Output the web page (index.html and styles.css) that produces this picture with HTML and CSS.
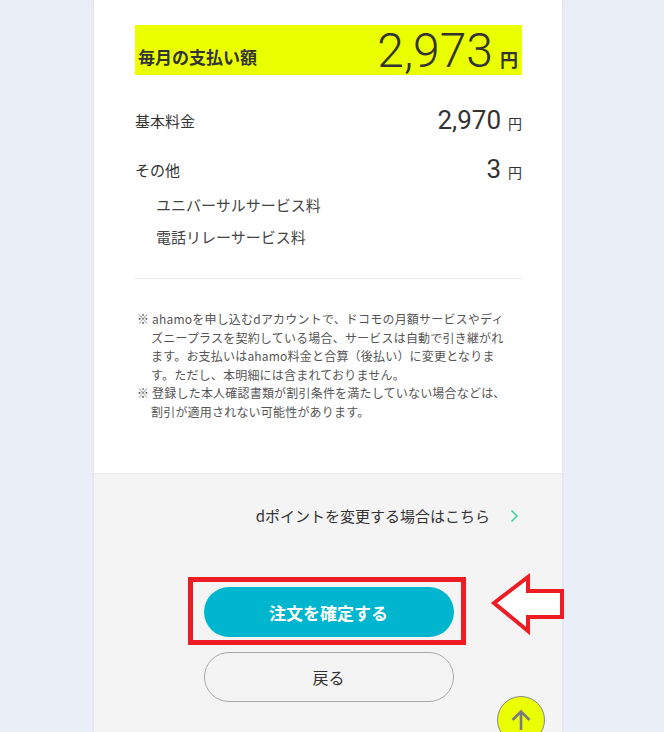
FILE: index.html
```html
<!DOCTYPE html>
<html lang="ja">
<head>
    <meta charset="UTF-8">
    <meta name="viewport" content="width=device-width, initial-scale=1.0">
    <title>お支払い内容の確認</title>
    <link rel="stylesheet" href="styles.css">
</head>
<body>

<div class="card">
    <section class="summary">
        <div class="total">
            <span class="total-label">毎月の支払い額</span>
            <span class="total-price"><span class="num">2,973</span><span class="yen">円</span></span>
        </div>

        <div class="fee-row">
            <span class="fee-name">基本料金</span>
            <span class="fee-price"><span class="num">2,970</span><span class="yen">円</span></span>
        </div>
        <div class="fee-row">
            <span class="fee-name">その他</span>
            <span class="fee-price"><span class="num">3</span><span class="yen">円</span></span>
        </div>
        <ul class="fee-sub">
            <li>ユニバーサルサービス料</li>
            <li>電話リレーサービス料</li>
        </ul>

        <hr class="divider">

        <!-- 注意事項 -->
        <ul class="notes">
            <li>※ ahamoを申し込むdアカウントで、ドコモの月額サービスやディズニープラスを契約している場合、サービスは自動で引き継がれます。お支払いはahamo料金と合算（後払い）に変更となります。ただし、本明細には含まれておりません。</li>
            <li>※ 登録した本人確認書類が割引条件を満たしていない場合などは、割引が適用されない可能性があります。</li>
        </ul>
    </section>

    <section class="actions">
        <a href="#" class="dpoint-link">dポイントを変更する場合はこちら
            <svg width="9" height="14" viewBox="0 0 9 14"><path d="M1.5 1.5 L7 7 L1.5 12.5" fill="none" stroke="#3fd19c" stroke-width="1.6"/></svg>
        </a>

        <div class="confirm-wrap">
            <button type="button" class="btn-confirm">注文を確定する</button>
            <span class="highlight"></span>
        </div>
        <button type="button" class="btn-back">戻る</button>
    </section>
</div>

<!-- 注釈の矢印 -->
<svg class="pointer" width="80" height="66" viewBox="0 0 80 66">
    <polygon points="4,30 38,4 38,18 72,18 72,44 38,44 38,58" fill="#fff" stroke="#ee1c25" stroke-width="4" stroke-linejoin="miter"/>
</svg>

<a href="#" class="to-top">
    <svg width="24" height="24" viewBox="0 0 24 24"><path d="M12 22 V4 M3.5 12 L12 3.5 L20.5 12" fill="none" stroke="#7a7a7a" stroke-width="2.6"/></svg>
</a>

</body>
</html>
```

FILE: styles.css
```css
body {
    margin: 0;
    background-color: #e9eef7;
    font-family: "Noto Sans CJK JP", "Noto Sans", sans-serif;
    color: #333;
    overflow: hidden;
}
.card {
    width: 468px;
    margin-left: 94px;
    background-color: #f4f4f4;
    box-shadow: 0 0 3px rgba(0, 0, 0, 0.1);
    min-height: 780px;
}
.summary {
    background-color: #fff;
    padding: 25px 40px 52px 41px;
    border-bottom: 1px solid #ececec;
}

/* 合計 */
.total {
    height: 50px;
    display: flex;
    justify-content: space-between;
    align-items: flex-end;
    background-color: #eaff00;
    padding: 0 4px 0 3px;
}
.total-label {
    font-size: 17px;
    font-weight: bold;
    line-height: 24px;
    margin-bottom: 6px;
}
.total-price .num {
    font-family: Roboto, "Liberation Sans", sans-serif;
    font-weight: 300;
    font-size: 48px;
    line-height: 1;
}
.total-price .yen {
    font-size: 18px;
    font-weight: bold;
    margin-left: 7px;
}

/* 内訳 */
.fee-row {
    height: 30px;
    display: flex;
    justify-content: space-between;
    align-items: center;
    margin-top: 30px;
}
.fee-row + .fee-row {
    margin-top: 19px;
}
.fee-name {
    font-size: 15px;
}
.fee-price .num {
    font-family: Roboto, "Liberation Sans", sans-serif;
    font-weight: 400;
    font-size: 26px;
    line-height: 30px;
}
.fee-price .yen {
    font-size: 14px;
    margin-left: 7px;
}
.fee-sub {
    list-style: none;
    margin: 5px 0 0;
    padding-left: 21px;
}
.fee-sub li {
    font-size: 15px;
    line-height: 32px;
    color: #444;
}
.divider {
    margin: 25px 0 0;
    border: none;
    border-top: 1px solid #ebebeb;
}

/* 注意事項 */
.notes {
    list-style: none;
    margin: 31px 0 0;
    padding: 0 13px 0 16px;
}
.notes li {
    font-size: 12px;
    letter-spacing: 0.2px;
    line-height: 18.5px;
    text-indent: -14px;
    color: #555;
}

/* ボタン類 */
.actions {
    padding: 30px 40px 60px 41px;
}
.dpoint-link {
    display: flex;
    justify-content: flex-end;
    align-items: center;
    gap: 20px;
    padding-right: 3px;
    font-size: 15px;
    line-height: 24px;
    color: #333;
    text-decoration: none;
}
.confirm-wrap {
    position: relative;
    width: 250px;
    margin: 59px auto 0;
}
.btn-confirm, .btn-back {
    display: block;
    width: 250px;
    height: 50px;
    border-radius: 25px;
    font-family: inherit;
    cursor: pointer;
}
.btn-confirm {
    border: none;
    background-color: #00b5ce;
    color: #fff;
    font-size: 17px;
    font-weight: bold;
}
.btn-back {
    margin: 15px auto 0;
    border: 1px solid #a9a9a9;
    background-color: transparent;
    color: #333;
    font-size: 16px;
}
.highlight {
    position: absolute;
    top: -10px;
    left: -16px;
    right: -12px;
    bottom: -8px;
    border: 5px solid #ee1c25;
}
.pointer {
    position: absolute;
    left: 490px;
    top: 573px;
}
.to-top {
    position: absolute;
    left: 497px;
    top: 696px;
    width: 46px;
    height: 46px;
    border: 1px solid #888;
    border-radius: 50%;
    background-color: #eaff00;
    display: flex;
    justify-content: center;
    align-items: center;
}
```
